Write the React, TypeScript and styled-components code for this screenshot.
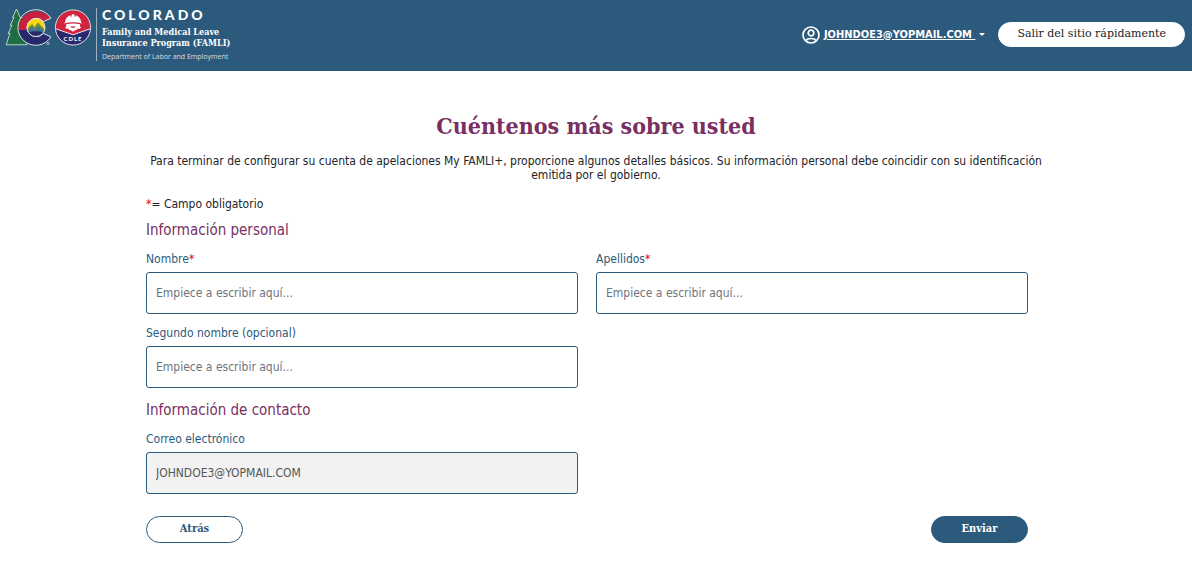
import React from "react";
import styled, { createGlobalStyle } from "styled-components";

const slab = `"DejaVu Serif Condensed", "DejaVu Serif", serif`;
const slabWide = `"DejaVu Serif", serif`;
const sans = `"DejaVu Sans Condensed", "Open Sans", sans-serif`;
const blue = "#2c5a7c";
const plum = "#7a2f63";

const GlobalStyle = createGlobalStyle`
  *, *::before, *::after { box-sizing: border-box; }
  body {
    margin: 0;
    background: #fff;
    color: #212529;
    font-family: ${sans};
    font-size: 12px;
    line-height: 14px;
  }
`;

const Header = styled.header`
  display: flex;
  align-items: center;
  justify-content: space-between;
  padding: 8px 7px 10px 5px;
  background: ${blue};
  color: #fff;
`;

const Brand = styled.a`
  display: flex;
  align-items: flex-start;
  color: inherit;
  text-decoration: none;
`;

const BrandText = styled.span`
  display: flex;
  flex-direction: column;
  margin-left: 4px;
  padding-left: 5px;
  border-left: 1px solid #9db3c4;
  white-space: nowrap;
`;

const BrandState = styled.span`
  font: 900 14px/14px Lato, sans-serif;
  letter-spacing: 3px;
`;

const BrandProgram = styled.span`
  margin: 5px 0 4px;
  font: bold 9px/11px ${slab};
`;

const BrandDepartment = styled.span`
  font: 7px/8px "Open Sans", sans-serif;
  color: #d5dfe7;
`;

const HeaderActions = styled.nav`
  display: flex;
  align-items: center;
  gap: 13px;
`;

const AccountButton = styled.button`
  display: flex;
  align-items: center;
  gap: 4px;
  padding: 0;
  border: 0;
  background: none;
  color: #fff;
  font: bold 11px/14px ${sans};
  cursor: pointer;
`;

const AccountName = styled.span`
  white-space: pre;
  text-decoration: underline;
`;

const Caret = styled.span`
  border: 3px solid transparent;
  border-top-color: #fff;
  border-bottom: 0;
`;

type PillVariant = "light" | "outline" | "solid";

const pillText: Record<PillVariant, string> = { light: "#212529", outline: blue, solid: "#fff" };

const PillButton = styled.button<{ $variant: PillVariant }>`
  min-width: 97px;
  padding: ${(p) => (p.$variant === "light" ? "4px 18px 6px" : "5px 18px 7px")};
  border: 1px solid ${(p) => (p.$variant === "light" ? "#fff" : blue)};
  border-radius: 14px;
  background: ${(p) => (p.$variant === "solid" ? blue : "#fff")};
  color: ${(p) => pillText[p.$variant]};
  font-family: ${(p) => (p.$variant === "light" ? slabWide : slab)};
  font-size: 11px;
  font-weight: ${(p) => (p.$variant === "light" ? 400 : 700)};
  line-height: 13px;
  cursor: pointer;
`;

const Main = styled.main`
  max-width: 900px;
  margin: 0 auto;
  padding: 39px 0 40px;
`;

const Title = styled.h1`
  margin: 0 0 12px;
  color: ${plum};
  font: bold 23px/32px ${slab};
  text-align: center;
`;

const Intro = styled.p`
  margin: 0 0 15px;
  text-align: center;
`;

const RequiredNote = styled.p`
  margin: 0 0 9px;
`;

const Star = styled.span`
  color: #f00000;
`;

const Fields = styled.fieldset`
  display: flex;
  flex-wrap: wrap;
  margin: 0;
  padding: 0;
  border: 0;
`;

const SectionTitle = styled.legend`
  margin: 0 0 12px;
  padding: 0;
  color: ${plum};
  font-size: 15px;
  line-height: 20px;
`;

const FieldBox = styled.div`
  display: flex;
  flex-direction: column;
  gap: 6px;
  width: 48%;
  margin: 0 2% 12px 0;
`;

const Label = styled.label`
  color: ${blue};
`;

const Input = styled.input`
  width: 100%;
  height: 42px;
  padding: 0 9px;
  border: 1px solid ${blue};
  border-radius: 3px;
  background: #fff;
  color: #212529;
  font: inherit;

  &::placeholder { color: #6c757d; opacity: 1; }
  &:disabled { background: #f2f2f2; color: #555; }
`;

const Actions = styled.div`
  display: flex;
  justify-content: space-between;
  margin: 10px 2% 0 0;
`;

const CdleText = styled.text`
  font: bold 6px Lato, sans-serif;
  letter-spacing: 1px;
`;

function Logo() {
  return (
    <svg width="87" height="40" viewBox="0 0 87 40" aria-hidden="true">
      <defs>
        <clipPath id="sky"><circle cx="31" cy="19.5" r="9" /></clipPath>
        <clipPath id="seal"><circle cx="68" cy="19.5" r="17.2" /></clipPath>
      </defs>
      {/* evergreen */}
      <path
        d="M11.5 1 L7.6 9.5 L9 9.3 L5.2 17.5 L7 17.2 L3.2 25.5 L5 25.2 L1.2 36.8 H22 V17 L17 9.3 L15.2 9.5 Z"
        fill="#1f6e43" stroke="#dfe8e2" strokeWidth="0.8" strokeLinejoin="round"
      />
      {/* letter-shaped ring: red over blue, open to the right */}
      <path d="M45.6 10.5 A18 18 0 0 0 13.2 22 L22 22 A9.4 9.4 0 0 1 38 13.4 Z" fill="#c8203f" />
      <path d="M13.2 22 A18 18 0 0 0 45.6 29.5 L38 25.6 A9.4 9.4 0 0 1 22 22 Z" fill="#28286c" />
      <path
        d="M45.9 10.2 A17.8 17.8 0 1 0 45.9 28.8 L38.4 25.4 A9.2 9.2 0 1 1 38.4 13.6 Z"
        fill="none" stroke="#e9edf2" strokeWidth="0.9" strokeLinejoin="round"
      />
      {/* sun, mountains and plain */}
      <g clipPath="url(#sky)">
        <rect x="21" y="10" width="20" height="20" fill="#fbd60c" />
        <path d="M21 22 L27 16 L29.5 19 L33 14.5 L41 23 V30 H21Z" fill="#6d8b4b" />
        <path d="M21 24 L27 19 L30 22 L33 18.5 L41 25 V30 H21Z" fill="#3f7391" />
        <path d="M21 25 Q31 21.5 41 25 V30 H21Z" fill="#28286c" />
      </g>
      <circle cx="31" cy="19.5" r="9" fill="none" stroke="#e9edf2" strokeWidth="0.9" />
      <circle cx="43" cy="35.4" r="1.1" fill="none" stroke="#dfe6ec" strokeWidth="0.7" />
      {/* labor seal */}
      <g clipPath="url(#seal)">
        <rect x="50" y="1" width="36" height="37" fill="#d2233f" />
        <path d="M50 20.5 L68 26.8 L86 20.5 V38 H50Z" fill="#28286c" />
        <path d="M50 20.5 L68 26.8 L86 20.5" fill="none" stroke="#fff" strokeWidth="0.9" />
      </g>
      <path
        d="M60 14.2 C60.3 10.6 62.5 8.2 65.4 7.2 L66 9.8 L67 6.2 H69.2 L70 9.8 L70.8 7.2 C73.7 8.2 75.8 10.6 76.2 14.2 L77 15.4 C71.5 13.8 65 13.8 59.2 15.4Z"
        fill="#fff"
      />
      <path
        d="M61 16.2 C65.5 15.1 70.7 15.1 75.2 16.2 L74.8 18.2 L76 19.4 L74.6 21 L73 20.5 L71.6 22 L69.4 22.4 L68 23.8 L66.6 22.4 L64.4 22 L63 20.5 L61.4 21 L60.2 19.4 L61.4 18.2Z"
        fill="#fff"
      />
      <path d="M65 18.6 A3.2 2.2 0 0 0 71 18.6Z" fill="#d2233f" />
      <circle cx="68" cy="19.5" r="17.6" fill="none" stroke="#e9edf2" strokeWidth="0.9" />
      <CdleText x="68" y="33.2" textAnchor="middle" fill="#fff">CDLE</CdleText>
    </svg>
  );
}

function AccountIcon() {
  return (
    <svg width="18" height="18" viewBox="0 0 18 18" fill="none" stroke="#fff" strokeWidth="1.7" aria-hidden="true">
      <circle cx="9" cy="9" r="8" />
      <circle cx="9" cy="7" r="2.8" />
      <path d="M3.6 14.6C6 11.8 12 11.8 14.4 14.6" />
    </svg>
  );
}

type FieldProps = { id: string; label: string; required?: boolean; value?: string };

function Field({ id, label, required, value }: FieldProps) {
  return (
    <FieldBox>
      <Label htmlFor={id}>
        {label}
        {required && <Star>*</Star>}
      </Label>
      <Input id={id} required={required} placeholder="Empiece a escribir aquí..." defaultValue={value} disabled={value !== undefined} />
    </FieldBox>
  );
}

export default function App() {
  return (
    <>
      <GlobalStyle />
      <Header>
        <Brand href="#">
          <Logo />
          <BrandText>
            <BrandState>COLORADO</BrandState>
            <BrandProgram>
              Family and Medical Leave
              <br />
              Insurance Program (FAMLI)
            </BrandProgram>
            <BrandDepartment>Department of Labor and Employment</BrandDepartment>
          </BrandText>
        </Brand>
        <HeaderActions>
          <AccountButton type="button">
            <AccountIcon />
            <AccountName>{"JOHNDOE3@YOPMAIL.COM "}</AccountName>
            <Caret />
          </AccountButton>
          <PillButton type="button" $variant="light">Salir del sitio rápidamente</PillButton>
        </HeaderActions>
      </Header>
      <Main>
        <Title>Cuéntenos más sobre usted</Title>
        <Intro>
          Para terminar de configurar su cuenta de apelaciones My FAMLI+, proporcione algunos detalles básicos. Su
          información personal debe coincidir con su identificación emitida por el gobierno.
        </Intro>
        <RequiredNote>
          <Star>*</Star>= Campo obligatorio
        </RequiredNote>
        <form onSubmit={(e) => e.preventDefault()}>
          <Fields>
            <SectionTitle>Información personal</SectionTitle>
            <Field id="nombre" label="Nombre" required />
            <Field id="apellidos" label="Apellidos" required />
            <Field id="segundo-nombre" label="Segundo nombre (opcional)" />
          </Fields>
          <Fields>
            <SectionTitle>Información de contacto</SectionTitle>
            <Field id="correo" label="Correo electrónico" value="JOHNDOE3@YOPMAIL.COM" />
          </Fields>
          <Actions>
            <PillButton type="button" $variant="outline">Atrás</PillButton>
            <PillButton type="submit" $variant="solid">Enviar</PillButton>
          </Actions>
        </form>
      </Main>
    </>
  );
}
